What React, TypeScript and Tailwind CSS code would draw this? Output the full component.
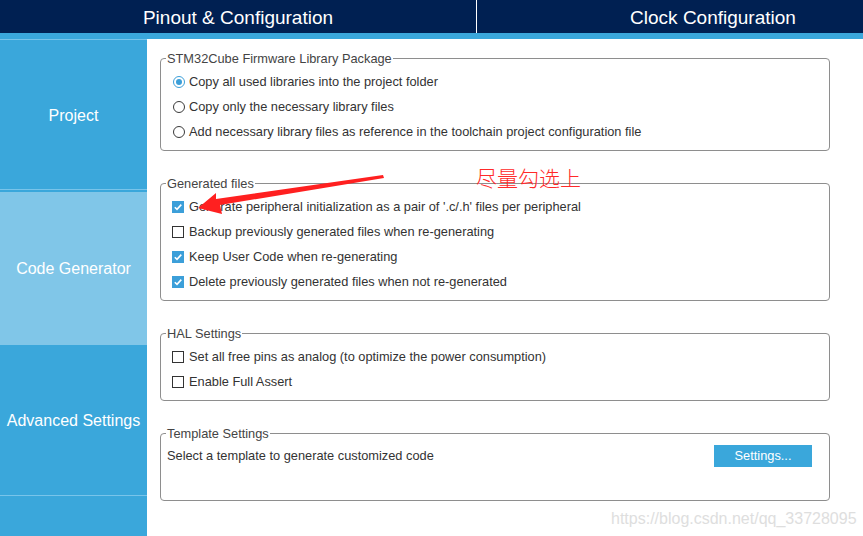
import type { ReactNode } from "react";

const BLUE = "bg-[#3aa7db]";

function Radio({ checked, label }: { checked?: boolean; label: string }) {
  return (
    <div className="flex h-[25px] items-center pl-[7px]">
      <span
        className={`flex h-[12px] w-[12px] items-center justify-center rounded-full border ${
          checked ? "border-[#3c9fd9]" : "border-[#3a3a3a]"
        }`}
      >
        {checked && <span className="h-[6px] w-[6px] rounded-full bg-[#3c9fd9]" />}
      </span>
      <span className="ml-[4px]">{label}</span>
    </div>
  );
}

function Check({ checked, label }: { checked?: boolean; label: string }) {
  return (
    <div className="flex h-[25px] items-center pl-[6px]">
      {checked ? (
        <span className="flex h-[12px] w-[12px] items-center justify-center bg-[#3c9fd9]">
          <svg width="10" height="10" viewBox="0 0 10 10">
            <path d="M1.8 5.2 L4 7.4 L8.3 2.6" fill="none" stroke="white" strokeWidth="1.6" />
          </svg>
        </span>
      ) : (
        <span className="h-[12px] w-[12px] border border-[#333] bg-white" />
      )}
      <span className="ml-[5px]">{label}</span>
    </div>
  );
}

function Group({ title, children }: { title: string; children: ReactNode }) {
  return (
    <fieldset className="rounded-[4px] border border-[#8e8e8e] px-[5px] pb-[6px]">
      <legend className="px-px text-[12.8px] leading-[15px] text-[#444]">{title}</legend>
      <div className="mt-[3px]">{children}</div>
    </fieldset>
  );
}

export default function App() {
  return (
    <div className="relative h-[536px] w-[863px] overflow-hidden bg-white font-['Liberation_Sans',Arial,sans-serif] text-[12.8px] text-[#333]">
      {/* Top tabs */}
      <div className="flex h-[33px] bg-[#002052] text-[19px] text-white">
        <div className="flex w-[477px] shrink-0 items-center justify-center border-r border-white pt-[3px]">
          Pinout &amp; Configuration
        </div>
        <div className="flex w-[472px] shrink-0 items-center justify-center pt-[3px]">Clock Configuration</div>
      </div>
      <div className={`h-[6px] ${BLUE}`} />

      <div className="flex h-[497px]">
        {/* Sidebar */}
        <div className={`flex w-[147px] flex-col ${BLUE} text-[16px] text-white`}>
          <div className="h-px bg-[#78c4ea]" />
          <div className="flex h-[149px] items-center justify-center pt-[2px]">Project</div>
          <div className="h-px bg-[#78c4ea]" />
          <div className="h-[2px]" />
          <div className="flex h-[153px] items-center justify-center bg-[#80c6e8]">Code Generator</div>
          <div className="flex h-[150px] items-center justify-center pt-[2px]">Advanced Settings</div>
          <div className="h-px bg-[#78c4ea]" />
          <div className="flex-1" />
        </div>

        {/* Main panel */}
        <div className="flex flex-1 flex-col gap-[25px] pl-[13px] pr-[33px] pt-[12px]">
          <Group title="STM32Cube Firmware Library Package">
            <Radio checked label="Copy all used libraries into the project folder" />
            <Radio label="Copy only the necessary library files" />
            <Radio label="Add necessary library files as reference in the toolchain project configuration file" />
          </Group>

          <Group title="Generated files">
            <Check checked label="Generate peripheral initialization as a pair of '.c/.h' files per peripheral" />
            <Check label="Backup previously generated files when re-generating" />
            <Check checked label="Keep User Code when re-generating" />
            <Check checked label="Delete previously generated files when not re-generated" />
          </Group>

          <Group title="HAL Settings">
            <Check label="Set all free pins as analog (to optimize the power consumption)" />
            <Check label="Enable Full Assert" />
          </Group>

          <fieldset className="rounded-[4px] border border-[#8e8e8e] px-[5px]">
            <legend className="px-px text-[12.8px] leading-[15px] text-[#444]">Template Settings</legend>
            <div className="flex h-[59px] items-start justify-between pr-[12px] pt-[4px]">
              <span className="pl-px leading-[22px]">Select a template to generate customized code</span>
              <button className="h-[22px] w-[98px] bg-[#3aa7db] text-[12.8px] text-white">Settings...</button>
            </div>
          </fieldset>
        </div>
      </div>

      {/* Annotation overlay */}
      <svg className="pointer-events-none absolute left-0 top-0" width="863" height="536">
        <polygon
          points="198,208 216,193 216,199 383,175 384,178 220,205 222,214"
          fill="#ff2020"
        />
      </svg>
      <div className="absolute left-[476px] top-[164px] font-['Noto_Sans_CJK_SC',sans-serif] text-[21px] font-light leading-[26px] text-[#ff2a2a]">
        尽量勾选上
      </div>

      {/* Watermark */}
      <div className="absolute left-[611px] top-[509px] text-[16px] leading-[20px] text-[#dedede]">
        https://blog.csdn.net/qq_33728095
      </div>
    </div>
  );
}
